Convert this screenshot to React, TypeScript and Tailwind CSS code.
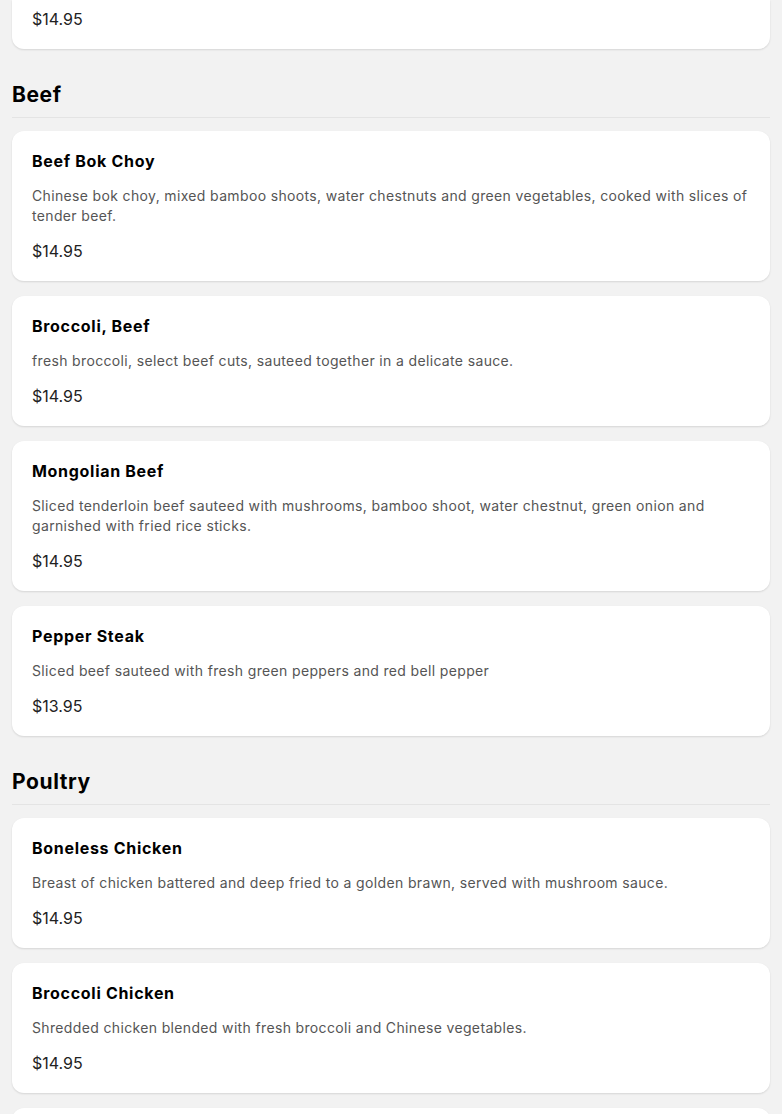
import React from 'react';

type Item = { name: string; desc?: string; price: string };

const sections: { title: string; items: Item[] }[] = [
  {
    title: 'Beef',
    items: [
      {
        name: 'Beef Bok Choy',
        desc: 'Chinese bok choy, mixed bamboo shoots, water chestnuts and green vegetables, cooked with slices of tender beef.',
        price: '$14.95',
      },
      {
        name: 'Broccoli, Beef',
        desc: 'fresh broccoli, select beef cuts, sauteed together in a delicate sauce.',
        price: '$14.95',
      },
      {
        name: 'Mongolian Beef',
        desc: 'Sliced tenderloin beef sauteed with mushrooms, bamboo shoot, water chestnut, green onion and garnished with fried rice sticks.',
        price: '$14.95',
      },
      {
        name: 'Pepper Steak',
        desc: 'Sliced beef sauteed with fresh green peppers and red bell pepper',
        price: '$13.95',
      },
    ],
  },
  {
    title: 'Poultry',
    items: [
      {
        name: 'Boneless Chicken',
        desc: 'Breast of chicken battered and deep fried to a golden brawn, served with mushroom sauce.',
        price: '$14.95',
      },
      {
        name: 'Broccoli Chicken',
        desc: 'Shredded chicken blended with fresh broccoli and Chinese vegetables.',
        price: '$14.95',
      },
      {
        name: 'Cashew Chicken',
        desc: 'Diced chicken sauteed with cashew nuts and mixed vegetables.',
        price: '$14.95',
      },
    ],
  },
];

function MenuCard({ item }: { item: Item }) {
  return (
    <div className="bg-white rounded-xl px-5 pt-5 pb-5 shadow-[0_1px_2px_rgba(0,0,0,0.12)]">
      <h3 className="text-[16px] leading-[20px] font-bold tracking-[0.7px] text-black">{item.name}</h3>
      {item.desc && (
        <p className="mt-[15px] text-[14px] leading-[20px] tracking-[0.35px] text-[#555]">{item.desc}</p>
      )}
      <p className="mt-[15px] text-[16px] leading-[20px] text-[#222]">{item.price}</p>
    </div>
  );
}

export default function App() {
  return (
    <div
      className="min-h-screen bg-[#f2f2f2] px-3 overflow-hidden"
      style={{ fontFamily: 'Inter, "Noto Sans", sans-serif' }}
    >
      {/* tail of the previous card, page is scrolled */}
      <div className="bg-white rounded-b-xl px-5 pt-[9px] pb-5 shadow-[0_1px_2px_rgba(0,0,0,0.12)]">
        <p className="text-[16px] leading-[20px] text-[#222]">$14.95</p>
      </div>

      {sections.map((section) => (
        <section key={section.title}>
          <h2 className="mt-8 pb-2 text-[21px] leading-[28px] font-bold tracking-[0.6px] text-black border-b border-[#e4e4e4]">
            {section.title}
          </h2>
          <div className="mt-[13px] flex flex-col gap-[15px]">
            {section.items.map((item) => (
              <MenuCard key={item.name} item={item} />
            ))}
          </div>
        </section>
      ))}
    </div>
  );
}
